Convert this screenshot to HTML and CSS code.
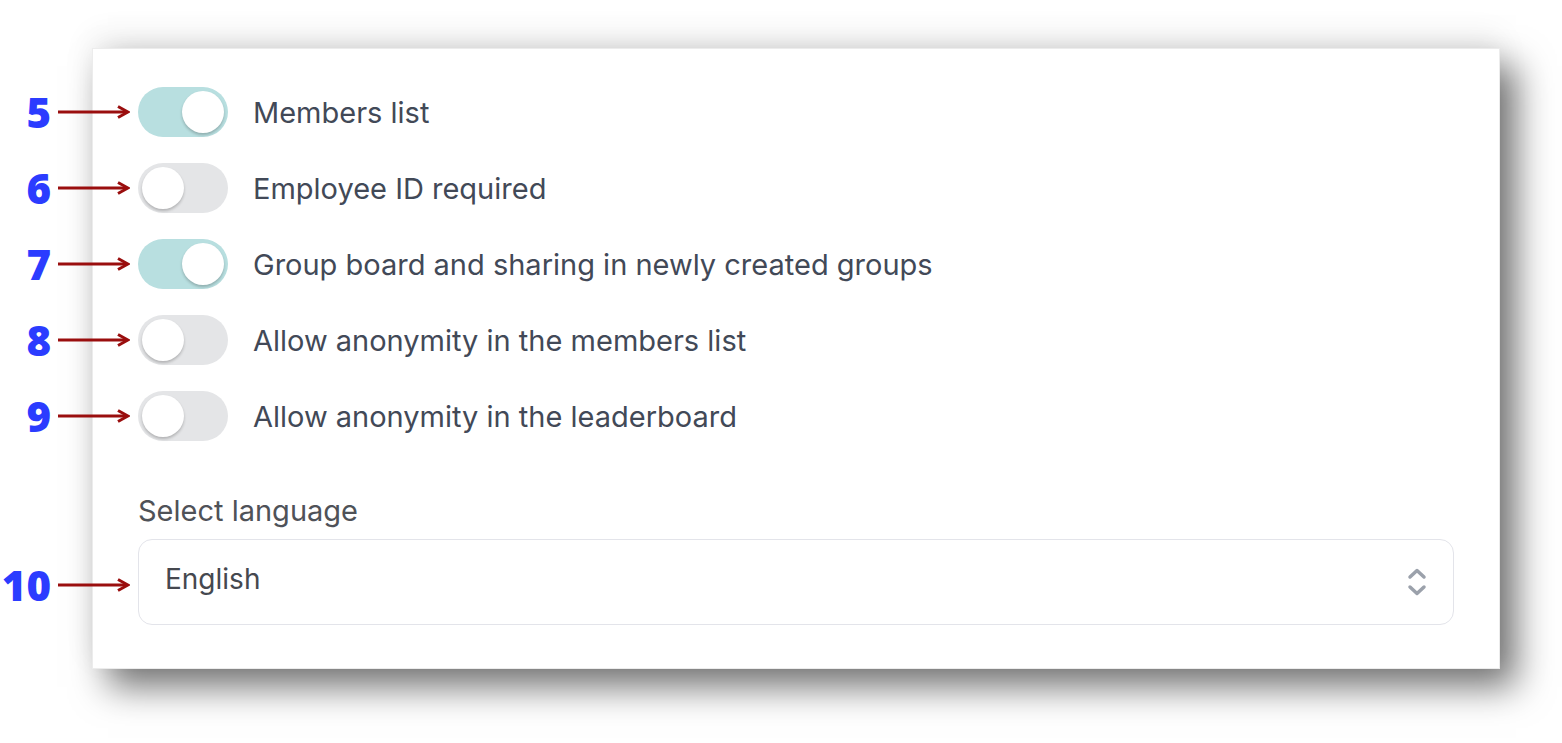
FILE: index.html
```html
<!DOCTYPE html>
<html lang="en">
<head>
<meta charset="UTF-8">
<meta name="viewport" content="width=device-width, initial-scale=1.0">
<title>Community settings</title>
<link rel="stylesheet" href="styles.css">
</head>
<body>
    <div class="card">
        <div class="toggles">
            <div class="row">
                <span class="marker"><b>5</b><svg width="72" height="16" viewBox="0 0 72 16"><path d="M0 8H68" stroke="#9a0e0e" stroke-width="3"/><path d="M60 2.5L70 8L60 13.5" fill="none" stroke="#9a0e0e" stroke-width="3"/></svg></span>
                <span class="switch on"><span class="knob"></span></span>
                <span class="label">Members list</span>
            </div>
            <div class="row">
                <span class="marker"><b>6</b><svg width="72" height="16" viewBox="0 0 72 16"><path d="M0 8H68" stroke="#9a0e0e" stroke-width="3"/><path d="M60 2.5L70 8L60 13.5" fill="none" stroke="#9a0e0e" stroke-width="3"/></svg></span>
                <span class="switch"><span class="knob"></span></span>
                <span class="label">Employee ID required</span>
            </div>
            <div class="row">
                <span class="marker"><b>7</b><svg width="72" height="16" viewBox="0 0 72 16"><path d="M0 8H68" stroke="#9a0e0e" stroke-width="3"/><path d="M60 2.5L70 8L60 13.5" fill="none" stroke="#9a0e0e" stroke-width="3"/></svg></span>
                <span class="switch on"><span class="knob"></span></span>
                <span class="label">Group board and sharing in newly created groups</span>
            </div>
            <div class="row">
                <span class="marker"><b>8</b><svg width="72" height="16" viewBox="0 0 72 16"><path d="M0 8H68" stroke="#9a0e0e" stroke-width="3"/><path d="M60 2.5L70 8L60 13.5" fill="none" stroke="#9a0e0e" stroke-width="3"/></svg></span>
                <span class="switch"><span class="knob"></span></span>
                <span class="label">Allow anonymity in the members list</span>
            </div>
            <div class="row">
                <span class="marker"><b>9</b><svg width="72" height="16" viewBox="0 0 72 16"><path d="M0 8H68" stroke="#9a0e0e" stroke-width="3"/><path d="M60 2.5L70 8L60 13.5" fill="none" stroke="#9a0e0e" stroke-width="3"/></svg></span>
                <span class="switch"><span class="knob"></span></span>
                <span class="label">Allow anonymity in the leaderboard</span>
            </div>
        </div>

        <div class="field">
            <div class="field-label">Select language</div>
            <div class="select">
                <span class="marker"><b>10</b><svg width="72" height="16" viewBox="0 0 72 16"><path d="M0 8H68" stroke="#9a0e0e" stroke-width="3"/><path d="M60 2.5L70 8L60 13.5" fill="none" stroke="#9a0e0e" stroke-width="3"/></svg></span>
                <span class="value">English</span>
                <svg class="chevrons" width="20" height="32" viewBox="0 0 20 32">
                    <path d="M3 11L10 4.5L17 11" fill="none" stroke="#9ba1ab" stroke-width="3.5" stroke-linecap="round" stroke-linejoin="round"/>
                    <path d="M3 21L10 27.5L17 21" fill="none" stroke="#9ba1ab" stroke-width="3.5" stroke-linecap="round" stroke-linejoin="round"/>
                </svg>
            </div>
        </div>
    </div>
</body>
</html>
```

FILE: styles.css
```css
html,
body {
    margin: 0;
    height: 100%;
    overflow: hidden;
}

body {
    box-sizing: border-box;
    padding: 48px 0 0 92px;
    background-color: #fff;
    font-family: Inter, "Noto Sans", sans-serif;
}

.card {
    box-sizing: border-box;
    width: 1408px;
    height: 621px;
    padding: 38px 45px 0 45px;
    background-color: #fff;
    border: 1px solid #ececec;
    box-shadow: 16px 18px 34px rgba(0, 0, 0, 0.55), 0 -12px 30px rgba(0, 0, 0, 0.07);
}

.toggles {
    display: flex;
    flex-direction: column;
    gap: 26px;
}

.row {
    position: relative;
    display: flex;
    align-items: center;
    gap: 25px;
    height: 50px;
}

/* numbered callouts drawn over the left edge */
.marker {
    position: absolute;
    left: -138px;
    top: 50%;
    transform: translateY(-50%);
    display: flex;
    align-items: center;
    width: 130px;
}

.marker b {
    width: 51px;
    text-align: right;
    font-family: "Open Sans", sans-serif;
    font-weight: 800;
    font-size: 42px;
    line-height: 1;
    color: #2b3cff;
}

.marker svg {
    margin-left: 7px;
}

.switch {
    position: relative;
    box-sizing: border-box;
    width: 90px;
    height: 50px;
    border-radius: 25px;
    background-color: #e4e5e7;
    flex-shrink: 0;
}

.switch.on {
    background-color: #b8dfe0;
}

.knob {
    position: absolute;
    top: 4px;
    left: 4px;
    width: 42px;
    height: 42px;
    border-radius: 50%;
    background-color: #fff;
    box-shadow: 0 2px 3px rgba(0, 0, 0, 0.22);
}

.switch.on .knob {
    left: 44px;
}

.label {
    font-size: 29px;
    color: #424957;
}

.field {
    margin-top: 52px;
}

.field-label {
    font-size: 29px;
    color: #4f5258;
    margin-bottom: 11px;
}

.select {
    position: relative;
    box-sizing: border-box;
    display: flex;
    align-items: center;
    justify-content: space-between;
    height: 86px;
    padding: 0 26px 6px 26px;
    border: 1.5px solid #e3e4ea;
    border-radius: 14px;
}

.select .marker {
    left: -139px;
    margin-top: 3px;
}

.chevrons {
    margin-top: 6px;
}

.value {
    font-size: 28px;
    color: #45484f;
}
```
